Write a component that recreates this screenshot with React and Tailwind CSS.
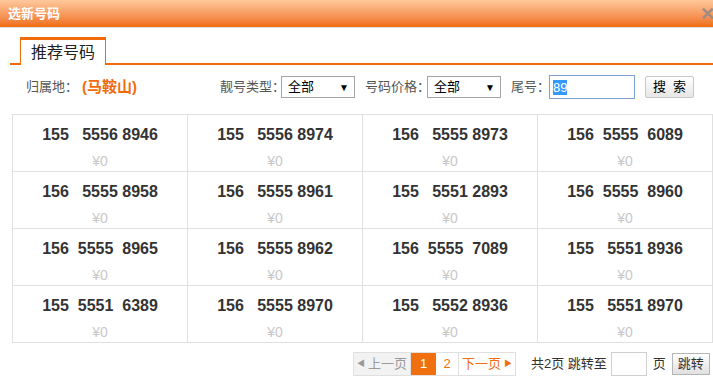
import React from "react"

const numbers = [
  "155   5556 8946",
  "155   5556 8974",
  "156   5555 8973",
  "156  5555  6089",
  "156   5555 8958",
  "156   5555 8961",
  "155   5551 2893",
  "156  5555  8960",
  "156  5555  8965",
  "156   5555 8962",
  "156  5555  7089",
  "155   5551 8936",
  "155  5551  6389",
  "156   5555 8970",
  "155   5552 8936",
  "155   5551 8970",
]

const cn = { fontFamily: '"Liberation Sans", "Noto Sans CJK SC", sans-serif' }

function FakeSelect() {
  return (
    <div className="shrink-0 w-[74px] h-[22px] border border-[#a5a5a5] bg-white flex items-center justify-between pl-[6px] pr-[5px] text-[13px] text-black">
      <span>全部</span>
      <span className="text-[10px]">▼</span>
    </div>
  )
}

export default function App() {
  return (
    <div className="w-[713px] h-[385px] bg-white overflow-hidden relative" style={cn}>
      <div className="h-[28px] bg-gradient-to-b from-[#fec89b] to-[#ee6d08] flex items-center pl-[8px] border-b border-[#e0e0e0]">
        <span className="text-white text-[13px] font-bold">选新号码</span>
      </div>
      <div className="absolute right-[-2px] top-[5px] text-[#a08c84] text-[18px] font-bold leading-none">✕</div>

      <div className="mt-[9px] ml-[10px] flex items-end border-b-2 border-[#f26b0a]">
        <div className="ml-[10px] w-[86px] h-[28px] border-t-[3px] border-x border-[#f26b0a] bg-white -mb-[2px] flex items-center justify-center text-[16px] text-[#222]">
          推荐号码
        </div>
      </div>

      <div className="flex items-center h-[24px] mt-[10px] text-[13px] text-[#555] whitespace-nowrap">
        <span className="ml-[26px] w-[56px] shrink-0">归属地：</span>
        <span className="text-[15px] font-bold text-[#f26b0a]">(马鞍山)</span>
        <span className="ml-auto w-[61px] shrink-0">靓号类型：</span>
        <FakeSelect />
        <span className="ml-[10px] w-[62px] shrink-0">号码价格：</span>
        <FakeSelect />
        <span className="ml-[10px] w-[38px] shrink-0">尾号：</span>
        <div className="shrink-0 w-[86px] h-[24px] border border-[#7da2ce] bg-white flex items-center pl-[3px] text-[13px]">
          <span className="bg-[#3399ff] text-white leading-[15px]">89</span>
        </div>
        <div className="shrink-0 ml-[10px] mr-[19px] w-[49px] h-[22px] border border-[#c8c8c8] rounded-[2px] bg-gradient-to-b from-white to-[#e6e6e6] flex items-center justify-center text-[13px] text-black whitespace-pre">
          搜  索
        </div>
      </div>

      <div className="mt-[15px] ml-[12px] w-[701px] grid grid-cols-4 border-t border-l border-[#e0e0e0]">
        {numbers.map((n, i) => (
          <div key={i} className="h-[57px] border-r border-b border-[#e0e0e0] flex flex-col items-center pt-[10px]">
            <span className="whitespace-pre text-[16px] font-bold text-[#333] leading-[20px]" style={{ fontFamily: '"Liberation Sans", Arial, sans-serif' }}>
              {n}
            </span>
            <span className="mt-[8px] text-[14px] text-[#c8c8c8] leading-[16px]">¥0</span>
          </div>
        ))}
      </div>

      <div className="mt-[9px] flex items-center text-[13px]">
        <div className="ml-[353px] flex h-[24px] border border-[#e0e0e0]">
          <div className="w-[57px] bg-[#f2f2f2] text-[#999] flex items-center justify-center border-r border-[#e0e0e0]">
            <span className="text-[8px] mr-[3px]">◀</span>上一页
          </div>
          <div className="w-[25px] bg-[#f07010] text-white flex items-center justify-center">1</div>
          <div className="w-[23px] text-[#f07010] flex items-center justify-center border-r border-[#e0e0e0]">2</div>
          <div className="w-[56px] text-[#f07010] flex items-center justify-center">
            下一页<span className="text-[8px] ml-[3px]">▶</span>
          </div>
        </div>
        <span className="ml-[15px] text-[#333]">共2页 跳转至</span>
        <div className="ml-[4px] w-[36px] h-[24px] border border-[#d0d0d0] bg-white"></div>
        <span className="ml-[6px] text-[#333]">页</span>
        <div className="ml-[6px] w-[38px] h-[22px] border border-[#b5b5b5] bg-gradient-to-b from-white to-[#e0e0e0] flex items-center justify-center text-[#333]">
          跳转
        </div>
      </div>
    </div>
  )
}
